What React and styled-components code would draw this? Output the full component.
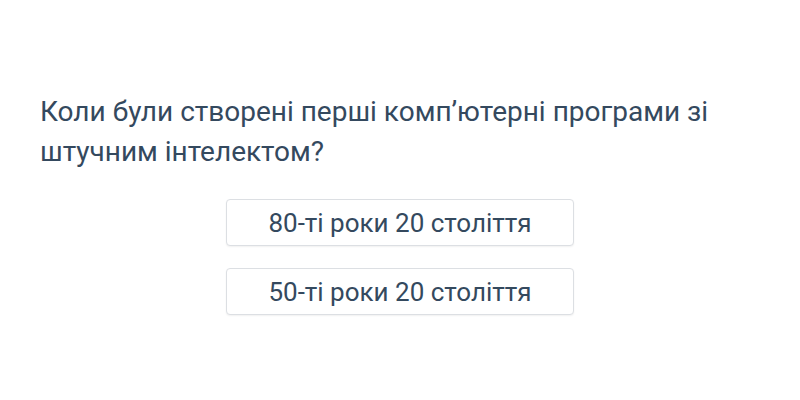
import React from 'react'
import styled, {createGlobalStyle} from 'styled-components'

const GlobalStyle = createGlobalStyle`
  body {
    margin: 0;
    background: #ffffff;
    font-family: Roboto, "Noto Sans", sans-serif;
  }
`

const answers = ['80-ті роки 20 століття', '50-ті роки 20 століття']

const Page = styled.div`
  height: 400px;
  box-sizing: border-box;
  padding: 7px 40px 0;
  display: flex;
  flex-direction: column;
  justify-content: center;
`
const Question = styled.div`
  color: #34495e;
  font-size: 28px;
  line-height: 40px;
  max-width: 700px;
  margin-bottom: 27px;
`
const Answers = styled.div`
  display: flex;
  flex-direction: column;
  align-items: center;
  gap: 22px;
`
const Answer = styled.button`
  width: 348px;
  height: 47px;
  background: #fff;
  border: 1px solid #dcdfe3;
  border-radius: 4px;
  box-shadow: 0 1px 2px rgba(0, 0, 0, 0.06);
  color: #34495e;
  font-family: Roboto, sans-serif;
  font-size: 26px;
  cursor: pointer;
`

const App = () => (
  <Page>
    <GlobalStyle />
    <Question>
      Коли були створені перші комп’ютерні програми зі штучним інтелектом?
    </Question>
    <Answers>
      {answers.map(a => (
        <Answer key={a}>{a}</Answer>
      ))}
    </Answers>
  </Page>
)

export default App
